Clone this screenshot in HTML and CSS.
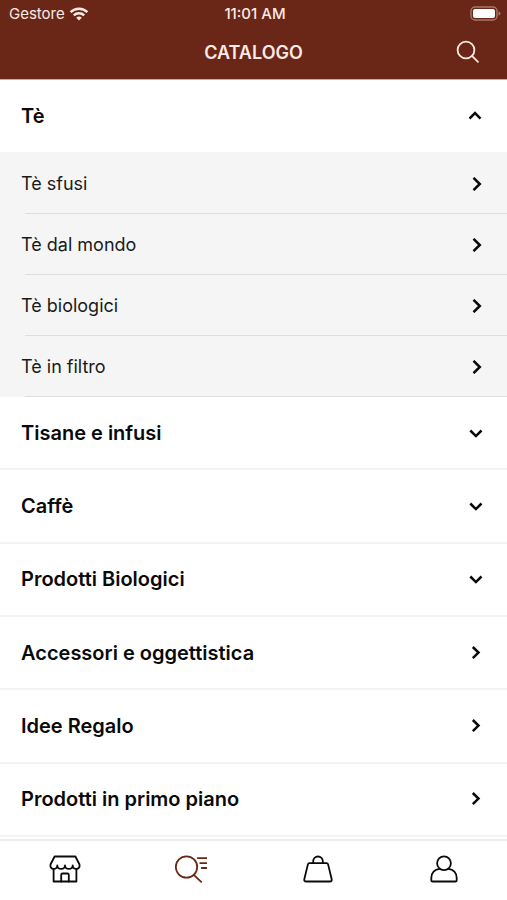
FILE: index.html
```
<!DOCTYPE html>
<html lang="it">
<head>
	<meta charset="UTF-8">
	<meta name="viewport" content="width=device-width, initial-scale=1.0">
	<title>Catalogo</title>
	<link rel="stylesheet" href="styles.css">
</head>
<body>
	<header class="header">
		<div class="status-bar">
			<div class="carrier">
				<span>Gestore</span>
				<svg width="20" height="14" viewBox="0 0 20 14" fill="none" stroke="currentColor" stroke-width="2.5">
					<path d="M1.6 5.1a12 12 0 0 1 16.8 0"/>
					<path d="M4.8 8.4a7.4 7.4 0 0 1 10.4 0"/>
					<path d="M7.2 10.8a4 4 0 0 1 5.6 0L10 13.6z" fill="currentColor" stroke="none"/>
				</svg>
			</div>
			<span class="time">11:01 AM</span>
			<svg class="battery" width="31" height="15" viewBox="0 0 31 15">
				<rect x="1" y="1" width="26" height="13" rx="4" fill="none" stroke="#a5786a" stroke-width="1.4"/>
				<rect x="3" y="3" width="22" height="9" rx="2" fill="#fff"/>
				<path d="M28.5 5.2q2 .8 2 2.3t-2 2.3z" fill="#a5786a"/>
			</svg>
		</div>
		<div class="title-bar">
			<h1>CATALOGO</h1>
			<button class="search-button" aria-label="Cerca">
				<svg width="24" height="24" viewBox="0 0 24 24" fill="none" stroke="currentColor" stroke-width="1.8" stroke-linecap="round">
					<circle cx="10" cy="10" r="8.4"/>
					<path d="M16.2 16.2l5.8 5.6"/>
				</svg>
			</button>
		</div>
	</header>

	<main class="catalog">
		<section>
			<button class="category open" aria-expanded="true">
				<span>Tè</span>
				<svg class="chevron" viewBox="0 0 14 14"><path d="M.5 9.600L6 4l5.500 5.600"/></svg>
			</button>
			<ul class="subcategories">
				<li><a href="#">
					<span>Tè sfusi</span>
					<svg class="chevron" viewBox="0 0 14 14"><path d="M4.500 .8L10.800 7l-6.300 6.200"/></svg>
				</a></li>
				<li><a href="#">
					<span>Tè dal mondo</span>
					<svg class="chevron" viewBox="0 0 14 14"><path d="M4.500 .8L10.800 7l-6.300 6.200"/></svg>
				</a></li>
				<li><a href="#">
					<span>Tè biologici</span>
					<svg class="chevron" viewBox="0 0 14 14"><path d="M4.500 .8L10.800 7l-6.300 6.200"/></svg>
				</a></li>
				<li><a href="#">
					<span>Tè in filtro</span>
					<svg class="chevron" viewBox="0 0 14 14"><path d="M4.500 .8L10.800 7l-6.300 6.200"/></svg>
				</a></li>
			</ul>
		</section>
		<button class="category" aria-expanded="false">
			<span>Tisane e infusi</span>
			<svg class="chevron" viewBox="0 0 14 14"><path d="M1.300 4.500l5.600 5.600 5.600-5.600"/></svg>
		</button>
		<button class="category" aria-expanded="false">
			<span>Caffè</span>
			<svg class="chevron" viewBox="0 0 14 14"><path d="M1.300 4.500l5.600 5.600 5.600-5.600"/></svg>
		</button>
		<button class="category" aria-expanded="false">
			<span>Prodotti Biologici</span>
			<svg class="chevron" viewBox="0 0 14 14"><path d="M1.300 4.500l5.600 5.600 5.600-5.600"/></svg>
		</button>
		<a class="category" href="#">
			<span>Accessori e oggettistica</span>
			<svg class="chevron" viewBox="0 0 14 14"><path d="M3.800 1l5.700 5.600-5.700 5.600"/></svg>
		</a>
		<a class="category" href="#">
			<span>Idee Regalo</span>
			<svg class="chevron" viewBox="0 0 14 14"><path d="M3.800 1l5.700 5.600-5.700 5.600"/></svg>
		</a>
		<a class="category" href="#">
			<span>Prodotti in primo piano</span>
			<svg class="chevron" viewBox="0 0 14 14"><path d="M3.800 1l5.700 5.600-5.700 5.600"/></svg>
		</a>
	</main>

	<nav class="tab-bar">
		<a href="#" aria-label="Negozio">
			<svg width="32" height="28" viewBox="0 0 32 28">
				<path d="M5.6 1.5h20.8L30.5 9.5c.6 3-1.4 4.4-3 4.4-2 0-3.7-1.2-3.8-3.4-.2 2.2-1.9 3.4-3.8 3.4s-3.7-1.2-3.9-3.4c-.2 2.2-2 3.4-3.9 3.4s-3.6-1.2-3.8-3.4c-.1 2.2-1.8 3.4-3.8 3.4-1.6 0-3.6-1.4-3-4.4z"/>
				<path d="M4.6 14v12.5h22.8V14"/>
				<path d="M12.2 26.5v-6.7q0-1.3 1.3-1.3h5q1.3 0 1.3 1.3v6.7"/>
			</svg>
		</a>
		<a href="#" class="active" aria-label="Catalogo" aria-current="page">
			<svg width="32" height="28" viewBox="0 0 32 28">
				<circle cx="11.5" cy="12" r="10.7"/>
				<path d="M18.8 19.8l7.4 7M22.8 3.1h9M25.2 8.1h6.6M26.7 13h5.1"/>
			</svg>
		</a>
		<a href="#" aria-label="Carrello">
			<svg width="32" height="28" viewBox="0 0 32 28">
				<path d="M7.4 8.2h17.2q1.2 0 1.5 1.2l3.6 14.8q.4 2.3-1.9 2.3H4.2q-2.3 0-1.9-2.3L5.9 9.4q.3-1.2 1.5-1.2z"/>
				<path d="M11.2 8.2V6.3a4.8 4.8 0 0 1 9.6 0v1.9"/>
			</svg>
		</a>
		<a href="#" aria-label="Profilo">
			<svg width="32" height="28" viewBox="0 0 32 28">
				<circle cx="16" cy="8.2" r="6.9"/>
				<path d="M11.200 13.800c-5 .9-7.900 4.600-7.900 9.200v2.200q0 1.300 1.300 1.300h22.800q1.300 0 1.300-1.300V23c0-4.600-2.900-8.300-7.900-9.200"/>
			</svg>
		</a>
	</nav>
</body>
</html>
```
FILE: styles.css
```
* {
	box-sizing: border-box;
}

body {
	margin: 0;
	min-height: 100vh;
	display: flex;
	flex-direction: column;
	background: #fff;
	color: #0a0a0a;
	font-family: Inter, "Liberation Sans", sans-serif;
}

a {
	color: inherit;
	text-decoration: none;
}

button {
	border: none;
	background: none;
	color: inherit;
	font: inherit;
	cursor: pointer;
}

svg {
	display: block;
}

.header {
	background: #6a2616;
	color: #fbeae4;
	border-bottom: 1px solid #c9aca4;
}

.status-bar {
	display: grid;
	grid-template-columns: 1fr auto 1fr;
	align-items: center;
	height: 27px;
	padding: 0 6px 0 9px;
	font-size: 15px;
}

.carrier {
	display: flex;
	align-items: center;
	gap: 4px;
}

.time {
	font-weight: 500;
}

.battery {
	justify-self: end;
}

.title-bar {
	display: grid;
	grid-template-columns: 1fr auto 1fr;
	align-items: center;
	height: 52px;
	padding: 0 27px 2px;
}

.title-bar h1 {
	grid-column: 2;
	margin: 0;
	font-size: 18px;
	font-weight: 600;
}

.search-button {
	justify-self: end;
	padding: 0;
}

.catalog {
	flex: 1;
	display: flex;
	flex-direction: column;
	padding-bottom: 2px;
}

.category {
	flex: 1;
	display: flex;
	align-items: center;
	justify-content: space-between;
	width: 100%;
	min-height: 72px;
	padding: 0 24px 0 21px;
	border-bottom: 2px solid #f3f3f3;
	font-size: 20px;
	font-weight: 600;
	text-align: left;
}

.category.open {
	border-bottom: none;
}

.subcategories {
	margin: 0;
	padding: 1px 0 0;
	list-style: none;
	background: #f5f5f5;
	color: #1a1a1a;
	font-size: 18px;
}

.subcategories a {
	display: flex;
	align-items: center;
	justify-content: space-between;
	height: 61px;
	padding: 0 24px 0 21px;
	/* divider starts a little inside the row */
	background: linear-gradient(#dedede, #dedede) 25px 100% / 100% 1px no-repeat;
}

.chevron {
	width: 14px;
	height: 14px;
	fill: none;
	stroke: #0a0a0a;
	stroke-width: 2.5;
}

.tab-bar {
	display: grid;
	grid-template-columns: repeat(4, 1fr);
	height: 61px;
	padding: 14px 0 0 2px;
	border-top: 2px solid #ececec;
	background: #fff;
}

.tab-bar a {
	display: flex;
	justify-content: center;
}

.tab-bar svg {
	fill: none;
	stroke: currentColor;
	stroke-width: 1.8;
	stroke-linecap: round;
	stroke-linejoin: round;
}

.tab-bar .active {
	color: #6a2616;
}
```
